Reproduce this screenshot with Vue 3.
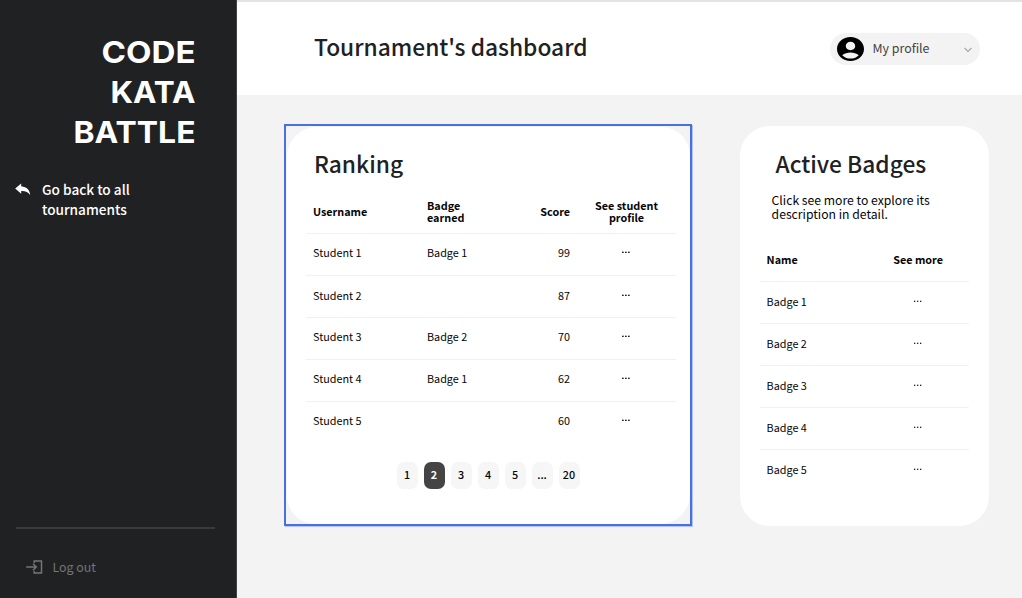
<script setup>
const brand = [
  { word: 'CODE', width: 94 },
  { word: 'KATA', width: 85 },
  { word: 'BATTLE', width: 122 },
]

const ranking = [
  { name: 'Student 1', badge: 'Badge 1', score: 99 },
  { name: 'Student 2', badge: '', score: 87 },
  { name: 'Student 3', badge: 'Badge 2', score: 70 },
  { name: 'Student 4', badge: 'Badge 1', score: 62 },
  { name: 'Student 5', badge: '', score: 60 },
]

const badges = ['Badge 1', 'Badge 2', 'Badge 3', 'Badge 4', 'Badge 5']
const pages = ['1', '2', '3', '4', '5', '...', '20']
</script>

<template>
  <div class="app">
    <aside class="sidebar">
      <div class="brand">
        <svg v-for="b in brand" :key="b.word" class="brand-line" width="140" height="40">
          <text x="139.5" y="31" text-anchor="end" :textLength="b.width" lengthAdjust="spacingAndGlyphs">{{ b.word }}</text>
        </svg>
      </div>
      <a class="back">
        <svg width="16" height="14" viewBox="0 0 16 14">
          <path d="M6.2 0.4 L0.2 5.6 L6.2 10.7 V7.9 C10.3 7.7 13 8.7 15.2 12 C14.8 7.2 12 4 6.2 3.3 Z" fill="#fff" />
        </svg>
        <span>Go back to all<br>tournaments</span>
      </a>
      <div class="bottom">
        <a class="logout">
          <svg width="17" height="14" viewBox="0 0 17 14" fill="none" stroke="#747576" stroke-width="1.5">
            <path d="M0.2 7 H10 M7 3.7 L10.3 7 L7 10.3" />
            <path d="M8.2 3 V1 H15.5 V13 H8.2 V11" />
          </svg>
          <span>Log out</span>
        </a>
      </div>
    </aside>

    <main class="main">
      <header class="header">
        <h1 class="title">Tournament's dashboard</h1>
        <button class="profile">
          <svg width="27" height="24" viewBox="2 2 20 20" preserveAspectRatio="none">
            <path d="M12 2C6.48 2 2 6.48 2 12s4.48 10 10 10 10-4.480 10-10S17.520 2 12 2zm0 4c1.930 0 3.500 1.570 3.500 3.500S13.930 13 12 13s-3.500-1.570-3.500-3.500S10.070 6 12 6zm0 14c-2.030 0-4.430-.820-6.140-2.880C7.550 15.800 9.680 15 12 15s4.450.800 6.140 2.120C16.430 19.180 14.030 20 12 20z" />
          </svg>
          <span class="profile-name">My profile</span>
          <svg class="chevron" width="8" height="6" viewBox="0 0 8 6" fill="none" stroke="#aaa" stroke-width="1.3">
            <path d="M0.6 1 L4 4.400 L7.400 1" />
          </svg>
        </button>
      </header>

      <div class="content">
        <div class="selection">
          <section class="card ranking">
            <h2 class="heading">Ranking</h2>
            <div class="table">
              <div class="row head">
                <span>Username</span>
                <span>Badge<br>earned</span>
                <span class="num">Score</span>
                <span class="mid">See student<br>profile</span>
              </div>
              <div v-for="r in ranking" :key="r.name" class="row">
                <span>{{ r.name }}</span>
                <span>{{ r.badge }}</span>
                <span class="num">{{ r.score }}</span>
                <span class="dots"><i></i><i></i><i></i></span>
              </div>
            </div>
            <nav class="pages">
              <span v-for="p in pages" :key="p" class="page" :class="{ active: p === '2' }">{{ p }}</span>
            </nav>
          </section>
        </div>

        <section class="card badges">
          <h2 class="heading">Active Badges</h2>
          <p class="hint">Click see more to explore its<br>description in detail.</p>
          <div class="table">
            <div class="row head">
              <span>Name</span>
              <span class="mid">See more</span>
            </div>
            <div v-for="b in badges" :key="b" class="row">
              <span>{{ b }}</span>
              <span class="dots"><i></i><i></i><i></i></span>
            </div>
          </div>
        </section>
      </div>
    </main>
  </div>
</template>

<style>
body {
  margin: 0;
  overflow: hidden;
}
</style>

<style scoped>
.app {
  display: flex;
  width: 1022px;
  height: 598px;
  font-family: "Noto Sans CJK SC", "Noto Sans", sans-serif;
  color: #050505;
}
.app * {
  box-sizing: border-box;
}
.sidebar {
  display: flex;
  flex-direction: column;
  width: 237px;
  border-right: 1px solid #414243;
  background: #202123;
}
.brand {
  display: flex;
  flex-direction: column;
  align-items: flex-end;
  padding: 32px 40px 0 0;
}
.brand-line {
  display: block;
  overflow: visible;
}
.brand-line text {
  font-family: Inter, sans-serif;
  font-size: 30.5px;
  font-weight: 700;
  fill: #fff;
}
.back {
  display: flex;
  gap: 11px;
  margin: 27px 0 0 15px;
  color: #fff;
  font-size: 13.65px;
  font-weight: 500;
  line-height: 20px;
}
.back svg {
  margin-top: 4px;
}
.bottom {
  width: 199px;
  height: 71px;
  margin: auto 0 0 16px;
  border-top: 2px solid #3a3b3c;
}
.logout {
  display: flex;
  align-items: center;
  gap: 9.5px;
  margin: 28px 0 0 10px;
  color: #747576;
  font-size: 12.4px;
  line-height: 20px;
}
.main {
  flex: 1;
  border-top: 2px solid #e3e3e3;
  background: #f3f3f3;
}
.header {
  display: flex;
  align-items: center;
  justify-content: space-between;
  height: 93px;
  padding: 0 42px 0 77px;
  background: #fff;
}
.title {
  margin: 0 0 4px;
  font-size: 22.75px;
  font-weight: 500;
  line-height: 36px;
  color: #202123;
}
.profile {
  display: flex;
  align-items: center;
  width: 150px;
  height: 32px;
  margin-top: 1px;
  padding: 0 8px 0 6.5px;
  border: 0;
  border-radius: 16px;
  background: #f3f3f3;
  font-family: inherit;
  font-size: 12.4px;
  color: #444;
}
.profile-name {
  margin: 0 0 2px 9px;
}
.chevron {
  margin: 2px 0 0 auto;
}
.content {
  display: flex;
  gap: 47.6px;
  padding: 29px 0 0 47px;
}
.selection {
  width: 408px;
  height: 402px;
  border: 2px solid #4a6fe0;
  background: #f3f3f3;
  box-shadow: 1px 1px 0 #b3c3f3;
}
.card {
  border-radius: 30px;
  background: #fff;
}
.ranking {
  height: 398px;
  padding: 19px 0 0 20px;
  box-shadow: inset 1px 1px 0 #f0f3fd;
}
.badges {
  width: 249px;
  height: 400px;
  margin-top: 2px;
  padding: 19px 0 0 20px;
}
.heading {
  margin: 0 0 0 8px;
  font-size: 22.75px;
  font-weight: 500;
  line-height: 38px;
  color: #202123;
}
.badges .heading {
  margin-left: 16px;
}
.hint {
  margin: 10px 0 0 12px;
  font-size: 12.2px;
  line-height: 14px;
}
.table {
  font-size: 10.8px;
  line-height: 12px;
}
.ranking .table {
  width: 370px;
  margin-top: 6px;
}
.badges .table {
  width: 209px;
  margin-top: 19px;
}
.row {
  display: grid;
  align-items: center;
  height: 42px;
  padding: 0 7px 4px;
  border-bottom: 1px solid #f1f1f1;
}
.row:last-child {
  border-bottom-color: transparent;
}
.ranking .row {
  grid-template-columns: 114px 100px 43px 99px;
  padding-bottom: 6px;
}
.ranking .row:nth-child(3) {
  padding-bottom: 4px;
}
.ranking .head {
  height: 45px;
  padding-bottom: 1px;
}
.badges .row {
  grid-template-columns: 102px 99px;
}
.head {
  font-weight: 700;
}
.num {
  text-align: right;
}
.mid {
  justify-self: center;
  text-align: center;
}
.ranking .mid,
.ranking .dots {
  margin-left: 14px;
}
.dots {
  display: flex;
  justify-self: center;
  gap: 1px;
  margin: 1px 1px 0 0;
}
.dots i {
  width: 2px;
  height: 2px;
  background: linear-gradient(#b5b5b5 50%, #222 50%);
  clip-path: inset(0 0.3px 0 0);
}
.pages {
  display: flex;
  gap: 6px;
  margin: 18px 0 0 90.5px;
}
.page {
  width: 21px;
  height: 27px;
  border-radius: 7px;
  background: #f6f6f6;
  font-size: 10.8px;
  font-weight: 500;
  line-height: 25px;
  text-align: center;
}
.page.active {
  background: #444;
  color: #fff;
  font-weight: 700;
}
</style>
